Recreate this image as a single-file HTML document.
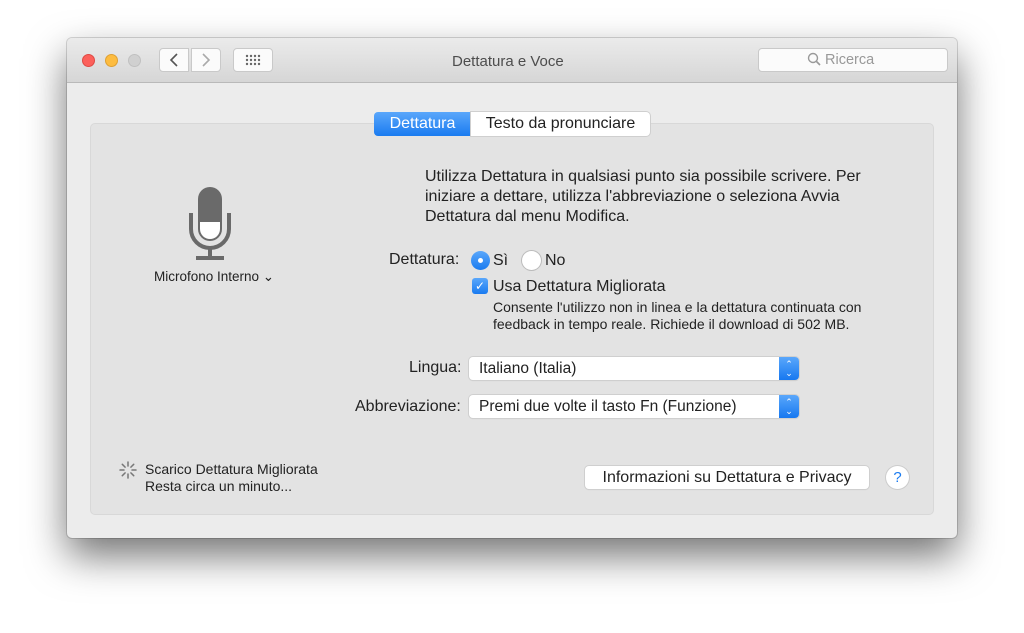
<!DOCTYPE html>
<html><head><meta charset="utf-8"><style>
*{margin:0;padding:0;box-sizing:border-box}
body{width:1024px;height:633px;background:#fff;position:relative;overflow:hidden;font-family:"Liberation Sans",sans-serif;color:#222}
.win{position:absolute;left:67px;top:38px;width:890px;height:500px;background:#ececec;border-radius:5px;box-shadow:0 18px 40px rgba(0,0,0,.55),0 0 0 1px rgba(0,0,0,.15)}
.tb{position:absolute;left:0;top:0;width:890px;height:45px;background:linear-gradient(#ebebeb,#d6d6d6);border-bottom:1px solid #b9b9b9;border-radius:5px 5px 0 0}
.dot{position:absolute;top:16px;width:13px;height:13px;border-radius:50%}
.btn{position:absolute;background:#fbfbfb;border:1px solid #c9c9c9;border-radius:4px}
.t{position:absolute;white-space:nowrap}
.box{position:absolute;left:23px;top:85px;width:844px;height:392px;background:#e3e3e3;border:1px solid #d8d8d8;border-radius:5px}
.pop{position:absolute;height:23px;background:#fff;border-radius:4px;box-shadow:0 0 0 1px #cfcfcf,0 1px 1px rgba(0,0,0,.1);font-size:15.5px;padding:3px 10px}
.arr{position:absolute;right:0;top:0;width:20px;height:23px;background:linear-gradient(#5aa7fb,#1778f0);border-radius:0 4px 4px 0;color:#fff;font-size:9px;text-align:center;line-height:9px;padding-top:3px}
</style></head><body>
<div class="win">
 <div class="tb">
  <div class="dot" style="left:15px;background:#fc605b;border:1px solid #de4a44"></div>
  <div class="dot" style="left:38px;background:#fdbc40;border:1px solid #dea033"></div>
  <div class="dot" style="left:61px;background:#d0d0d0;border:1px solid #c0c0c0"></div>
  <div class="btn" style="left:92px;top:10px;width:30px;height:24px;border-radius:4px 0 0 4px"><svg width="28" height="22"><path d="M17 5 L11 11 L17 17" fill="none" stroke="#555" stroke-width="1.6"/></svg></div>
  <div class="btn" style="left:124px;top:10px;width:30px;height:24px;border-radius:0 4px 4px 0"><svg width="28" height="22"><path d="M11 5 L17 11 L11 17" fill="none" stroke="#aaa" stroke-width="1.6"/></svg></div>
  <div class="btn" style="left:166px;top:10px;width:40px;height:24px"><svg width="38" height="22" fill="#666"><g><circle cx="13" cy="7" r="1.2"/><circle cx="17" cy="7" r="1.2"/><circle cx="21" cy="7" r="1.2"/><circle cx="25" cy="7" r="1.2"/><circle cx="13" cy="11" r="1.2"/><circle cx="17" cy="11" r="1.2"/><circle cx="21" cy="11" r="1.2"/><circle cx="25" cy="11" r="1.2"/><circle cx="13" cy="15" r="1.2"/><circle cx="17" cy="15" r="1.2"/><circle cx="21" cy="15" r="1.2"/><circle cx="25" cy="15" r="1.2"/></g></svg></div>
  <div class="t" style="left:385px;top:15px;font-size:15px;color:#4d4d4d">Dettatura e Voce</div>
  <div class="btn" style="left:691px;top:10px;width:190px;height:24px;font-size:14.5px;color:#999;padding:3px 0 0 48px"><svg width="14" height="14" style="vertical-align:-2px"><circle cx="6" cy="6" r="4.5" fill="none" stroke="#999" stroke-width="1.4"/><path d="M9.5 9.5 L13 13" stroke="#999" stroke-width="1.6"/></svg> Ricerca</div>
 </div>
 <div class="box"></div>
 <div style="position:absolute;left:307px;top:74px;width:97px;height:24px;background:linear-gradient(#5aa7fb,#1a7bf0);border-radius:4px 0 0 4px;color:#fff;font-size:16px;text-align:center;line-height:24px">Dettatura</div>
 <div style="position:absolute;left:404px;top:74px;width:179px;height:24px;background:#fff;border-radius:0 4px 4px 0;box-shadow:0 0 0 1px #cfcfcf;font-size:16px;text-align:center;line-height:24px">Testo da pronunciare</div>
 <svg style="position:absolute;left:120px;top:147px" width="46" height="78" viewBox="0 0 46 78">
  <rect x="11" y="2" width="24" height="54" rx="12" fill="#6a6a6a"/>
  <path d="M13 37 h20 v7 a10 10 0 0 1 -20 0z" fill="#fff"/>
  <path d="M4 28 v16 a19 19 0 0 0 38 0 v-16" fill="none" stroke="#6a6a6a" stroke-width="4"/>
  <rect x="21" y="62" width="4" height="10" fill="#6a6a6a"/>
  <rect x="9" y="71" width="28" height="4" fill="#6a6a6a"/>
 </svg>
 <div class="t" style="left:87px;top:231px;font-size:13.5px">Microfono Interno ⌄</div>
 <div class="t" style="left:358px;top:129px;font-size:16px;line-height:20px">Utilizza Dettatura in qualsiasi punto sia possibile scrivere. Per<br>iniziare a dettare, utilizza l'abbreviazione o seleziona Avvia<br>Dettatura dal menu Modifica.</div>
 <div class="t" style="left:322px;top:213px;font-size:16px">Dettatura:</div>
 <div style="position:absolute;left:404px;top:213px;width:19px;height:19px;border-radius:50%;background:linear-gradient(#5aa7fb,#1a7bf0)"><div style="position:absolute;left:7px;top:7px;width:5px;height:5px;border-radius:50%;background:#fff"></div></div>
 <div class="t" style="left:426px;top:214px;font-size:16px">Sì</div>
 <div style="position:absolute;left:455px;top:213px;width:19px;height:19px;border-radius:50%;background:#fff;box-shadow:0 0 0 1px #bbb"></div>
 <div class="t" style="left:478px;top:214px;font-size:16px">No</div>
 <div style="position:absolute;left:405px;top:240px;width:16px;height:16px;border-radius:3px;background:linear-gradient(#5aa7fb,#1a7bf0);color:#fff;font-size:12px;text-align:center;line-height:16px">✓</div>
 <div class="t" style="left:426px;top:240px;font-size:16px">Usa Dettatura Migliorata</div>
 <div class="t" style="left:426px;top:261px;font-size:14px;line-height:17px">Consente l'utilizzo non in linea e la dettatura continuata con<br>feedback in tempo reale. Richiede il download di 502 MB.</div>
 <div class="t" style="left:342px;top:321px;font-size:16px">Lingua:</div>
 <div class="pop" style="left:402px;top:319px;width:330px">Italiano (Italia)<div class="arr">⌃<br>⌄</div></div>
 <div class="t" style="left:288px;top:360px;font-size:16px">Abbreviazione:</div>
 <div class="pop" style="left:402px;top:357px;width:330px">Premi due volte il tasto Fn (Funzione)<div class="arr">⌃<br>⌄</div></div>
 <svg style="position:absolute;left:51px;top:422px" width="20" height="20" stroke="#777" stroke-width="1.5" stroke-linecap="round"><path d="M10 2v4M10 14v4M2 10h4M14 10h4M4.3 4.3l2.8 2.8M12.9 12.9l2.8 2.8M4.3 15.7l2.8-2.8M12.9 7.1l2.8-2.8"/></svg>
 <div class="t" style="left:78px;top:423px;font-size:14px;line-height:17px">Scarico Dettatura Migliorata<br>Resta circa un minuto...</div>
 <div style="position:absolute;left:518px;top:428px;width:284px;height:23px;background:#fff;border-radius:4px;box-shadow:0 0 0 1px #cfcfcf,0 1px 1px rgba(0,0,0,.1);font-size:16px;text-align:center;line-height:23px">Informazioni su Dettatura e Privacy</div>
 <div style="position:absolute;left:819px;top:428px;width:23px;height:23px;border-radius:50%;background:#fff;box-shadow:0 0 0 1px #ccc;color:#1a7bf0;font-size:15px;text-align:center;line-height:23px">?</div>
</div>
</body></html>
